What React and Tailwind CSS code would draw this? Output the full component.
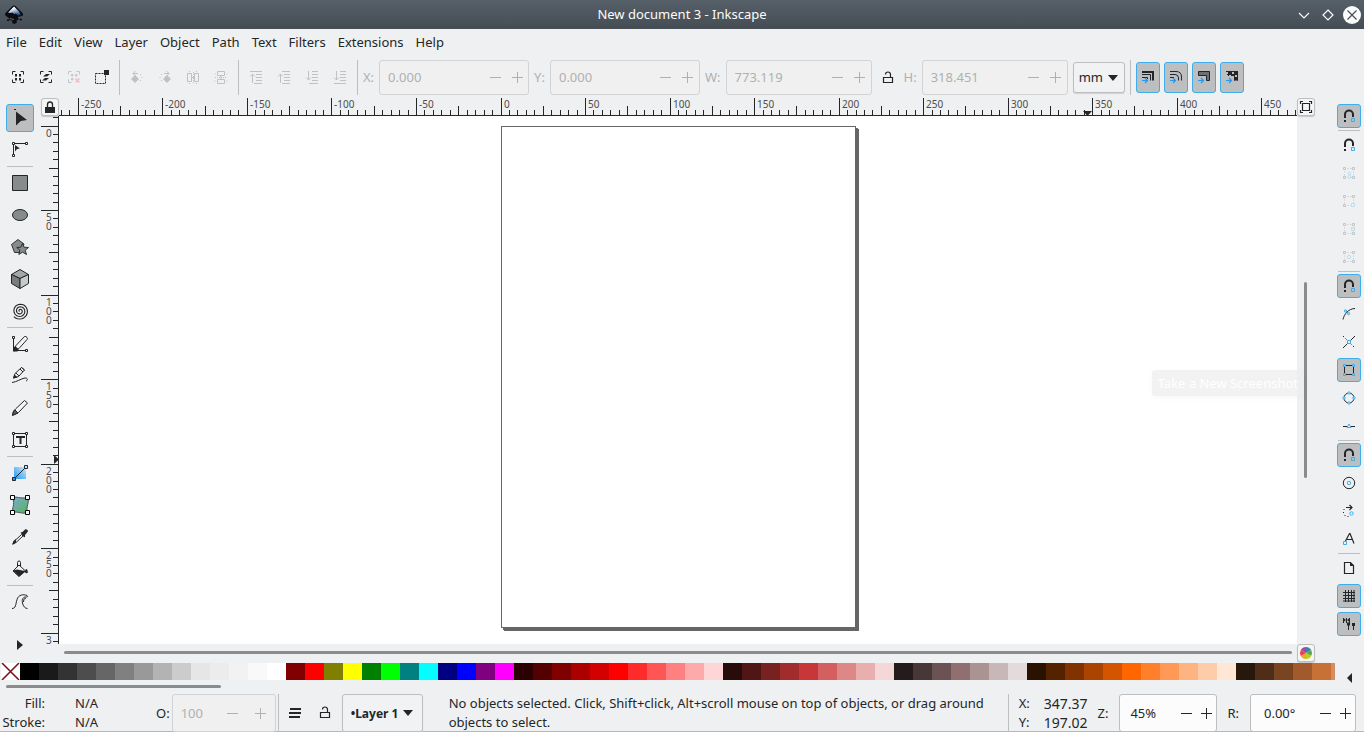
// App.jsx — vector editor window: menus, tool controls, rulers, canvas, palette, status bar
import { useLayoutEffect, useRef, useState } from "react";

const INK = "#232629";
const BLUE = "#3daee9";
const PX_PER_MM = 1.6905;

const MENUS = ["File", "Edit", "View", "Layer", "Object", "Path", "Text", "Filters", "Extensions", "Help"];

const PALETTE = [
  "#000000", "#1a1a1a", "#333333", "#4d4d4d", "#666666", "#808080", "#999999", "#b3b3b3", "#cccccc",
  "#e6e6e6", "#ececec", "#f2f2f2", "#f9f9f9", "#ffffff",
  "#800000", "#ff0000", "#808000", "#ffff00", "#008000", "#00ff00", "#008080", "#00ffff", "#000080",
  "#0000ff", "#800080", "#ff00ff",
  "#2b0000", "#550000", "#800000", "#aa0000", "#d40000", "#ff0000", "#ff2a2a", "#ff5555", "#ff8080",
  "#ffaaaa", "#ffd5d5",
  "#280b0b", "#501616", "#782121", "#a02c2c", "#c83737", "#d35f5f", "#de8787", "#e9afaf", "#f4d7d7",
  "#241c1c", "#483737", "#6c5353", "#916f6f", "#ac9393", "#c8b7b7", "#e3dbdb",
  "#2b1100", "#552200", "#803300", "#aa4400", "#d45500", "#ff6600", "#ff7f2a", "#ff9955", "#ffb380",
  "#ffccaa", "#ffe6d5",
  "#28170b", "#502d16", "#784421", "#a05a2c", "#c87137", "#d38d5f",
];

function Icon({ size = 16, children, ...rest }) {
  return (
    <svg width={size} height={size} viewBox={`0 0 ${size} ${size}`} fill="none" stroke={INK} strokeWidth="1"
      className="shrink-0" aria-hidden="true" {...rest}>
      {children}
    </svg>
  );
}

/* ── Icons: command bar ── */
const CORNERS = "M2.5 4.5v-3h3M10.5 1.5h3v3M13.5 9.5v3h-3M5.5 12.5h-3v-3";

const SelectAll = () => (
  <Icon>
    <path d={CORNERS} />
    <path d="M5 4h2v2.500H5zM9 4h2v2.500H9zM5 8h2v2.500H5zM9 8h2v2.500H9z" fill={INK} stroke="none" />
  </Icon>
);
const SelectAllLayers = () => (
  <Icon>
    <path d={CORNERS} />
    <path d="M5 6.500L8 4h4l-3 2.500zM4 10.500L7 8h4l-3 2.500z" fill={INK} stroke="none" />
  </Icon>
);
const Deselect = () => (
  <Icon stroke="#c3c5c7">
    <path d="M2.5 4.5v-3h3M10.5 1.5h3v3M5.5 12.5h-3v-3M5.5 4.5h1.500v1.500h-1.500zM9.5 4.5h1.500v1.500h-1.500zM5.5 8.5h1.500v1.500h-1.500z" />
    <path d="M9.500 8.500l4 4M13.500 8.500l-4 4" stroke="#f2bcc0" strokeWidth="1.5" />
  </Icon>
);
const TouchSelect = () => (
  <Icon>
    <path d="M1.500 3.500h10v10h-10z" strokeDasharray="2 1" />
    <path d="M10 0h5v5h-5z" fill={INK} stroke="none" />
  </Icon>
);
const RotateLeft = () => (
  <Icon stroke="#bfc1c3">
    <path d="M6 5l4 4-4 4-4-4z" fill="#bfc1c3" stroke="none" />
    <path d="M4 3.500h5M6.500 1L4 3.500L6.500 6" />
    <path d="M11 4.500h1M12.500 7.500h1M11 10.500h1" />
  </Icon>
);
const RotateRight = () => (
  <Icon stroke="#bfc1c3">
    <path d="M10 5l4 4-4 4-4-4z" fill="#bfc1c3" stroke="none" />
    <path d="M12 3.500H7M9.500 1L12 3.500L9.500 6M4 4.500h1M2.500 7.500h1M4 10.500h1" />
  </Icon>
);
const FlipH = () => (
  <Icon stroke="#bfc1c3">
    <path d="M2.500 3.500h4v8h-4zM9.500 3.500h4v8h-4zM6.500 7.500h3" />
    <path d="M4 1.500h1M11 1.500h1M4 13.500h1M11 13.500h1M8.500 2v11" strokeDasharray="1 1" />
  </Icon>
);
const FlipV = () => (
  <Icon stroke="#bfc1c3">
    <path d="M4.500 1.500h7v4h-7zM4.500 9.500h7v4h-7zM8 5.500v4" />
    <path d="M2 3.500v1M2 10.500v1M14 3.500v1M14 10.500v1M2 7.500h12" strokeDasharray="1 1" />
  </Icon>
);
const ToTop = () => (
  <Icon stroke="#bfc1c3"><path d="M2 1.500h12M8 4.500h6M8 7.500h6M8 10.500h6M6 13.500h8M4.500 13V4M2 6.500L4.500 4L7 6.500" /></Icon>
);
const RaiseUp = () => (
  <Icon stroke="#bfc1c3"><path d="M6 1.500h8M8 4.500h6M8 7.500h6M8 10.500h6M6 13.500h8M4.500 13V4M2 6.500L4.500 4L7 6.500" /></Icon>
);
const LowerDown = () => (
  <Icon stroke="#bfc1c3"><path d="M8 1.500h6M8 4.500h6M8 7.500h6M8 10.500h6M5 13.500h9M4.500 1v9M2 7.500L4.500 10L7 7.500" /></Icon>
);
const ToBottom = () => (
  <Icon stroke="#bfc1c3"><path d="M8 1.500h6M8 4.500h6M8 7.500h6M8 10.500h6M2 13.500h12M4.500 1v9M2 7.500L4.500 10L7 7.500" /></Icon>
);
const OpenLock = () => (
  <Icon>
    <path d="M3.500 7.500h9v5h-9z" strokeWidth="1.200" />
    <path d="M10.500 7.500V4.500a2.500 2.500 0 0 0-5 0" strokeWidth="1.200" />
  </Icon>
);

const ARROW = <path d="M2 10.500h5.500M5 8l2.500 2.500L5 13" stroke="#1d99f3" strokeWidth="1.200" />;
const ScaleStroke = () => (
  <Icon><path d="M2 2h11v8.500" strokeWidth="2" /><path d="M2 4.500h8.500v6M2 7.500h5.500V9" />{ARROW}</Icon>
);
const ScaleCorners = () => (
  <Icon><path d="M2 1.500h6q5.500 0 5.500 5.500v3.500M2 4.500h5q3.500 0 3.500 3.500v2.500M2 7.500h4" />{ARROW}</Icon>
);
const MoveGradients = () => (
  <Icon><path d="M2.500 1.500h11v9h-3v-5h-8z" fill="#6d7072" />{ARROW}</Icon>
);
const MovePatterns = () => (
  <Icon>
    <path d="M2 1.500h12M3 4.500h11M4.500 1v5M7.500 1v5M10.500 1v9.500M13.500 1v9.500M10 7.500h4M10 10h4" />
    <path d="M5 2h2v2H5zM11 2h2v2h-2zM8 5h2v1H8zM11 8h2v2h-2z" fill={INK} stroke="none" />
    {ARROW}
  </Icon>
);

/* ── Icons: toolbox ── */
const Selector = () => (
  <Icon size={24}>
    <path d="M8 5.500l11 8.500-6.200 1L8 19.500z" fill={INK} stroke="none" />
    <path d="M6 3.500h2" />
  </Icon>
);
const NodeTool = () => (
  <Icon size={24}>
    <path d="M5.500 16V5.500H17" />
    <path d="M4.500 4.500h2v2h-2zM17.500 4.500h2v2h-2zM4.500 16.500h2v2h-2z" fill="#fff" />
    <path d="M7 7l5 3.500-3 .5-2 2.500z" fill={INK} stroke="none" />
  </Icon>
);
const RectTool = () => <Icon size={24}><path d="M4.500 4.500h15v15h-15z" fill="#888b8c" /></Icon>;
const EllipseTool = () => <Icon size={24}><ellipse cx="12" cy="12" rx="7.500" ry="5.500" fill="#888b8c" /></Icon>;
const StarTool = () => (
  <Icon size={24} strokeWidth="0.900">
    <path d="M10 4.500l6 4.500-2.500 8.500H6.500L3.500 9.500z" fill="#888b8c" />
    <path d="M14.500 8.500l1.600 3.700 4.400.3-3.300 2.800 1.300 4.200-4-2.300-3.700 2.300 1-4.300-3-2.700 4-.3z" fill="#888b8c" />
  </Icon>
);
const BoxTool = () => (
  <Icon size={24}>
    <path d="M12 2.500l8.500 5L12 11.500l-8.500-4z" fill="#a4a6a7" />
    <path d="M3.500 7.500l8.500 4v10l-8.500-5z" fill="#7a7d7e" />
    <path d="M20.500 7.500l-8.500 4v10l8.500-5z" fill="#c8caca" />
  </Icon>
);

/* Three turns outward from the centre, ending at the lower left */
const SPIRAL = Array.from({ length: 73 }, (_, i) => {
  const turn = i / 24;
  const angle = turn * 2 * Math.PI + 2.4;
  const r = 0.6 + turn * 2.6;
  return `${i ? "L" : "M"}${(12 + r * Math.cos(angle)).toFixed(2)} ${(12 + r * Math.sin(angle)).toFixed(2)}`;
}).join("");
const SpiralTool = () => <Icon size={24}><path d={SPIRAL} strokeWidth="1.100" /></Icon>;

const PenTool = () => (
  <Icon size={24}>
    <path d="M5.500 6v12.500H18" />
    <path d="M4.500 4.500h2v2h-2zM17.500 17.500h2v2h-2z" fill="#fff" />
    <path d="M8 13.500l8.500-9q1.500-.5 2.500 1t0 2L11 16.500l-5 2.500z" fill="#f4f5f6" />
    <path d="M5 19.500V15l2.500-.5 3 2.500-1 2.500z" fill={INK} stroke="none" />
  </Icon>
);
const PencilTool = () => (
  <Icon size={24}>
    <path d="M7 9.500l6.500-6 3 2.500L10.500 12.500 5.500 14zM12 5l3 3M8 9l3 3" />
    <path d="M5 14.500l1.500-4 3 3z" fill={INK} stroke="none" />
    <path d="M4 18.500c5-.5 9-4 13-4.500 3-.2 3 2.500 1 3M13.500 3.500l3 2.500" />
  </Icon>
);
const BrushTool = () => (
  <Icon size={24}>
    <path d="M7.500 13L16.500 4.500l3 2.500-9 9.500-3 1.500-3 1 1-3.500z" fill="#f4f5f6" />
    <path d="M4.500 19.500l1-4.500 1.500-1 3 3z" fill="#5b5e60" />
  </Icon>
);
const TextTool = () => (
  <Icon size={24}>
    <path d="M5.500 5.500h13v13h-13z" />
    <path d="M4.500 4.500h2v2h-2zM17.500 4.500h2v2h-2zM4.500 17.500h2v2h-2zM17.500 17.500h2v2h-2z" fill="#fff" />
    <path d="M8 9h9M12.500 8.500V16" strokeWidth="2" />
  </Icon>
);
const GradientTool = () => (
  <Icon size={24}>
    <defs>
      <linearGradient id="grad-tool" x1="0" y1="1" x2="1" y2="0">
        <stop offset="0" stopColor="#1d99f3" /><stop offset="1" stopColor="#cbe7fb" />
      </linearGradient>
    </defs>
    <path d="M6 6h12v12H6z" fill="url(#grad-tool)" stroke="none" />
    <path d="M6 18L18 6" />
    <path d="M4.500 16.500h3v3h-3z" fill="#1d99f3" /><path d="M16.500 4.500h3v3h-3z" fill="#cbe7fb" />
  </Icon>
);
const MeshTool = () => (
  <Icon size={24}>
    <defs>
      <linearGradient id="mesh-tool" x1="0" y1="0" x2="1" y2="1">
        <stop offset="0" stopColor="#7aa9d6" /><stop offset="1" stopColor="#57b558" />
      </linearGradient>
    </defs>
    <path d="M4.500 4.500c4-1.500 7 1.500 15 0 2.500 5-2 9 0 15-6 2-9-1.500-15 0-1-4 3-8 0-15z" fill="url(#mesh-tool)" stroke="#4d5052" />
    <path d="M2.500 2.500h4v4h-4zM17.500 2.500h4v4h-4zM2.500 17.500h4v4h-4zM17.500 17.500h4v4h-4z" fill="#fff" stroke="#000" />
  </Icon>
);
const DropperTool = () => (
  <Icon size={24}>
    <path d="M13.500 9.500L6.500 16l-1.500 3L8 17.500l7-6.500z" fill="#f4f5f6" />
    <path d="M12.500 7.500l2-.5 2.500-2.500q1.500-.5 2.500.5t0 2L17 10v2l-1 .3zM4 20l1.500-4 2.500-2v3.500z" fill={INK} stroke="none" />
  </Icon>
);
const BucketTool = () => (
  <Icon size={24}>
    <path d="M9.500 10V5.500q0-1.500 1.500-1.500t1.500 1.500V9M11 8l6.500 6L11 19.500 5 14z" />
    <path d="M5 13.500l4-1 4 .8 4.500.7-6.500 5.500z" fill={INK} stroke="none" />
    <path d="M18.500 12q1.500 2.500 1 3.500t-2 0 1-3.500z" fill={INK} strokeWidth=".5" />
  </Icon>
);
const TweakTool = () => (
  <Icon size={24}>
    <path d="M4 18.500c4 0 3.500-4 5-9S15.500 4 19 5.500c1 1 .5 1.500-.5 1.500-3-.5-5 2-4 6 .5 3 2.500 5.500 5 5.500M18 8q-3 .5-2.500 4" />
  </Icon>
);

/* ── Icons: snap bar ── */
const Magnet = () => (
  <Icon>
    <path d="M4 10V6.500a4 4 0 0 1 8 0V9" strokeWidth="2" />
    <path d="M3 12h2v2H3z" fill={INK} stroke="none" />
    <path d="M10.500 10.500h3v3h-3z" stroke={BLUE} />
  </Icon>
);
const BOX_FAINT = "M2.500 2.500h2v2h-2zM11.500 2.500h2v2h-2zM2.500 11.500h2v2h-2z";
function FaintBox({ children, corner = true }) {
  return (
    <Icon stroke="#c3c5c7">
      <path d={BOX_FAINT} />
      {corner && <path d="M11.500 11.500h2v2h-2z" />}
      <path d="M6.500 3.500h4M3.500 6.500v4M12.500 6.500v4M6.500 12.500h4" strokeDasharray="1 2" />
      <g stroke="#b9dff3">{children}</g>
    </Icon>
  );
}
const SnapBBox = () => <FaintBox><circle cx="8.500" cy="8.500" r="1.500" /><circle cx="8.500" cy="12" r="1.500" /></FaintBox>;
const SnapBCorner = () => <FaintBox corner={false}><path d="M10.500 10.500h3v3h-3z" /></FaintBox>;
const SnapBEdge = () => <FaintBox><path d="M10.500 6.500h3v3h-3z" /></FaintBox>;
const SnapBCenter = () => <FaintBox><circle cx="8" cy="8" r="1.700" /></FaintBox>;
const SnapPath = () => (
  <Icon>
    <path d="M2 13.500C3 8 8 2.500 14 2.500" />
    <circle cx="4.500" cy="5" r="1.200" stroke={BLUE} /><circle cx="7.500" cy="7.500" r="1.200" stroke={BLUE} />
    <path d="M4.500 5l3 2.500" stroke={BLUE} />
  </Icon>
);
const SnapCross = () => (
  <Icon>
    <path d="M2 14L14 2" /><path d="M2 2l12 12" strokeDasharray="1.500 2" />
    <path d="M6.500 6.500h3v3h-3z" fill="#eff0f1" stroke={BLUE} />
  </Icon>
);
const SnapCusp = () => (
  <Icon>
    <path d="M3.500 3.500h9v9h-9z" />
    <path d="M2.500 2.500h2v2h-2zM11.500 2.500h2v2h-2zM2.500 11.500h2v2h-2zM11.500 11.500h2v2h-2z" fill="#bdbebf" stroke={BLUE} />
  </Icon>
);
const SnapSmooth = () => (
  <Icon>
    <circle cx="8" cy="8" r="5" />
    <g fill="#eff0f1" stroke={BLUE}>
      <circle cx="8" cy="3" r="1.200" /><circle cx="13" cy="8" r="1.200" />
      <circle cx="8" cy="13" r="1.200" /><circle cx="3" cy="8" r="1.200" />
    </g>
  </Icon>
);
const SnapMid = () => (
  <Icon><path d="M2 8.500h12" /><path d="M8 6l2 3.500H6z" fill="#eff0f1" stroke={BLUE} /></Icon>
);
const SnapCenter = () => <Icon><circle cx="8" cy="8" r="5.700" /><circle cx="8" cy="8" r="1.700" stroke={BLUE} /></Icon>;
const SnapRotation = () => (
  <Icon>
    <path d="M5 4.500h6M8.500 2L11 4.500L8.500 7" strokeWidth="1.200" />
    <path d="M3 6v1M2.500 9v1M4 12v1M7 13v1" />
    <circle cx="10.500" cy="10.500" r="1.700" stroke={BLUE} />
  </Icon>
);
const SnapText = () => (
  <Icon>
    <path d="M4.500 10L8.500 2.500h.5L13 12.500M6 8.500h5.500" strokeWidth="1.200" />
    <path d="M2.500 10.500h3v3h-3z" stroke={BLUE} />
  </Icon>
);
const SnapPage = () => (
  <Icon><path d="M3.500 2.500h6l3 3v8h-9z" strokeWidth="1.200" /><path d="M9 2v4h4z" fill={INK} stroke="none" /></Icon>
);
const SnapGrid = () => (
  <Icon><path d="M4.500 2v12M7.500 2v12M10.500 2v12M13 2v12M2 4.500h12M2 7.500h12M2 10.500h12M2 13h12" /></Icon>
);
const SnapGuides = () => (
  <Icon>
    <path d="M2.500 2v5M5.500 2v5M8.500 2v5M7.500 8v6M12.500 9v5" />
    <path d="M6 6.500h3v3H6zM11 7h3v3h-3zM3 2.500l2 1.500-2 1.500zM8 2.500L6 4l2 1.500z" fill={INK} stroke="none" />
  </Icon>
);

const COMMANDS = [
  [
    { label: "Select all", icon: SelectAll },
    { label: "Select all in all layers", icon: SelectAllLayers },
    { label: "Deselect", icon: Deselect, disabled: true },
    { label: "Toggle touch selection", icon: TouchSelect },
  ],
  [
    { label: "Rotate left", icon: RotateLeft, disabled: true },
    { label: "Rotate right", icon: RotateRight, disabled: true },
    { label: "Flip horizontally", icon: FlipH, disabled: true },
    { label: "Flip vertically", icon: FlipV, disabled: true },
  ],
  [
    { label: "Raise to top", icon: ToTop, disabled: true },
    { label: "Raise", icon: RaiseUp, disabled: true },
    { label: "Lower", icon: LowerDown, disabled: true },
    { label: "Lower to bottom", icon: ToBottom, disabled: true },
  ],
];

const TRANSFORMS = [
  { label: "Scale stroke width", icon: ScaleStroke },
  { label: "Scale rounded corners", icon: ScaleCorners },
  { label: "Move gradients", icon: MoveGradients },
  { label: "Move patterns", icon: MovePatterns },
];

const TOOLS = [
  [{ label: "Selector", icon: Selector }, { label: "Node", icon: NodeTool }],
  [
    { label: "Rectangle", icon: RectTool }, { label: "Ellipse", icon: EllipseTool }, { label: "Star", icon: StarTool },
    { label: "3D box", icon: BoxTool }, { label: "Spiral", icon: SpiralTool },
  ],
  [
    { label: "Pen", icon: PenTool }, { label: "Pencil", icon: PencilTool },
    { label: "Calligraphy", icon: BrushTool }, { label: "Text", icon: TextTool },
  ],
  [
    { label: "Gradient", icon: GradientTool }, { label: "Mesh", icon: MeshTool },
    { label: "Dropper", icon: DropperTool }, { label: "Paint bucket", icon: BucketTool },
  ],
  [{ label: "Tweak", icon: TweakTool }],
];

const SNAPS = [
  [{ label: "Enable snapping", icon: Magnet, on: true }],
  [
    { label: "Snap bounding boxes", icon: Magnet }, { label: "Bounding box edges", icon: SnapBBox, disabled: true },
    { label: "Bounding box corners", icon: SnapBCorner, disabled: true },
    { label: "Edge midpoints", icon: SnapBEdge, disabled: true },
    { label: "Bounding box centers", icon: SnapBCenter, disabled: true },
  ],
  [
    { label: "Snap nodes", icon: Magnet, on: true }, { label: "Snap to paths", icon: SnapPath },
    { label: "Path intersections", icon: SnapCross }, { label: "Cusp nodes", icon: SnapCusp, on: true },
    { label: "Smooth nodes", icon: SnapSmooth }, { label: "Line midpoints", icon: SnapMid },
  ],
  [
    { label: "Snap others", icon: Magnet, on: true }, { label: "Object centers", icon: SnapCenter },
    { label: "Rotation centers", icon: SnapRotation }, { label: "Text baselines", icon: SnapText },
  ],
  [
    { label: "Page border", icon: SnapPage }, { label: "Grids", icon: SnapGrid, on: true },
    { label: "Guides", icon: SnapGuides, on: true },
  ],
];

function ToggleButton({ label, icon: Glyph, initial, disabled, size = "size-6" }) {
  const [on, setOn] = useState(initial);
  return (
    <button aria-label={label} aria-pressed={on} disabled={disabled} onClick={() => setOn(v => !v)}
      className={`${size} shrink-0 flex items-center justify-center rounded-[3px] border ${
        on ? "bg-[#bdbebf] border-[#3daee9]" : "border-transparent"
      }`}>
      <Glyph />
    </button>
  );
}

function SpinBox({ label, name, value, disabled, width, gap = "gap-[5px]", step = "w-[22px]", pad = "pl-2", labelColor = "" }) {
  const [val, setVal] = useState(value);
  const bump = d => setVal(v => String(parseFloat(v) + d));
  return (
    <div className={`flex items-center shrink-0 ${gap} ${disabled ? "text-[#aeb0b1]" : "text-[#232629]"}`}>
      <label htmlFor={name} className={labelColor}>{label}</label>
      <div className={`flex items-center h-full border rounded-[3px] overflow-hidden ${width} ${
        disabled ? "border-[#d2d3d4] bg-[#f0f0f0]" : "border-[#bcbebf] bg-[#fcfcfc]"
      }`}>
        <input id={name} type="text" value={val} disabled={disabled} onChange={e => setVal(e.target.value)}
          className={`flex-1 min-w-0 bg-transparent outline-none ${pad}`} />
        <button aria-label={`Decrease ${label}`} disabled={disabled} onClick={() => bump(-1)}
          className={`h-full shrink-0 flex items-center justify-center ${step}`}>
          <Icon size={11} stroke="currentColor"><path d="M0 5.500h11" /></Icon>
        </button>
        <button aria-label={`Increase ${label}`} disabled={disabled} onClick={() => bump(1)}
          className={`h-full shrink-0 flex items-center justify-center ${step}`}>
          <Icon size={11} stroke="currentColor"><path d="M0 5.500h11M5.500 0v11" /></Icon>
        </button>
      </div>
    </div>
  );
}

function Divider() {
  return <div className="w-px self-stretch bg-[#bcbebf] shrink-0" />;
}

/* Current size of an element, kept up to date */
function useSize() {
  const ref = useRef(null);
  const [size, setSize] = useState({ width: 0, height: 0 });
  useLayoutEffect(() => {
    const read = () => {
      const box = ref.current.getBoundingClientRect();
      setSize({ width: box.width, height: box.height });
    };
    read();
    const observer = new ResizeObserver(read);
    observer.observe(ref.current);
    return () => observer.disconnect();
  }, []);
  return [ref, size];
}

/* Ticks every 5 mm, longer at 25, longest and labelled at 50 */
function ticksWithin(length, origin) {
  const out = [];
  const first = Math.ceil(-origin / PX_PER_MM / 5) * 5;
  for (let mm = first; origin + mm * PX_PER_MM < length; mm += 5) {
    out.push({ mm, pos: Math.floor(origin + mm * PX_PER_MM) + 0.5 });
  }
  return out;
}

function HorizontalRuler() {
  const [ref, { width }] = useSize();
  return (
    <svg ref={ref} className="flex-1 min-w-0 h-[18px]" fill="#4d4d4d" fontSize="10" aria-label="Horizontal ruler">
      {ticksWithin(width, 442).map(({ mm, pos }) => (
        <g key={mm}>
          <path d={`M${pos} ${mm % 50 === 0 ? 0 : mm % 25 === 0 ? 8 : 12}V17`} stroke={INK} />
          {mm % 50 === 0 && <text x={pos + 2.5} y="10">{mm}</text>}
        </g>
      ))}
      <rect x="0" y="17" width="100%" height="1" fill={INK} />
      <path d="M1024 13h9l-4.500 5z" fill={INK} />
    </svg>
  );
}

function VerticalRuler() {
  const [ref, { height }] = useSize();
  return (
    <svg ref={ref} className="w-[18px] shrink-0 h-full" fill="#4d4d4d" fontSize="10" aria-label="Vertical ruler">
      {ticksWithin(height, 10).map(({ mm, pos }) => (
        <g key={mm}>
          <path d={`M${mm % 50 === 0 ? 0 : mm % 25 === 0 ? 8 : 12} ${pos}H17`} stroke={INK} />
          {mm % 50 === 0 && String(mm).split("").map((digit, i) => (
            pos + 10 + i * 9 <= height && <text key={i} x="5" y={pos + 10 + i * 9}>{digit}</text>
          ))}
        </g>
      ))}
      <rect x="17" y="0" width="1" height="100%" fill={INK} />
      <path d="M13 339v9l5-4.500z" fill={INK} />
    </svg>
  );
}

function CornerButton({ label, children }) {
  return (
    <button aria-label={label}
      className="size-[18px] shrink-0 flex items-center justify-center rounded-[3px] border border-[#bcbebf] bg-[#f4f5f5] shadow-[0_1px_1px_#c4c6c7]">
      {children}
    </button>
  );
}

function TitleBar() {
  return (
    <header className="h-[29px] shrink-0 flex items-center bg-linear-to-b from-[#566069] to-[#454c54] text-[#fcfcfc] text-[13px]">
      <div className="w-20 pl-1">
        <svg width="20" height="20" viewBox="0 0 20 20" aria-hidden="true">
          <defs>
            <linearGradient id="logo-snow" x1="0.300" y1="0" x2="0.800" y2="1">
              <stop offset="0.200" stopColor="#ffffff" /><stop offset="0.550" stopColor="#8aa6cc" />
              <stop offset="1" stopColor="#173667" />
            </linearGradient>
          </defs>
          <path d="M10 0.500q1 0 2 1l6.500 6.500q1.500 2-.5 3l-4 1q-1 1 1 1.500l-1 1.500-1.500.5.500 2-2.500 1.500-2.500-1 .5-2-4-1.500 1-1L2 11q-2-1.500-.5-3L8 1.500q1-1 2-1z" fill="#0b0d10" />
          <path d="M10 1.500l5 5 2 3.500-3 .5-2-2-2 .5-1.500-1.500-2 .5-2.500-.5z" fill="url(#logo-snow)" />
          <path d="M15.500 14.500h2.500M3 15l2 .5" stroke="#0b0d10" strokeWidth="1.500" />
          <path d="M6 13.500l4 1" stroke="#6a7079" />
        </svg>
      </div>
      <h1 className="flex-1 text-center">New document 3 - Inkscape</h1>
      <div className="w-20 pr-[3px] flex items-center justify-end gap-[6px]">
        <button aria-label="Minimize">
          <Icon size={18} stroke="#fcfcfc"><path d="M4 7l5 5 5-5" strokeWidth="1.200" /></Icon>
        </button>
        <button aria-label="Maximize">
          <Icon size={18} stroke="#fcfcfc"><path d="M9 4l5 5-5 5-5-5z" strokeWidth="1.200" /></Icon>
        </button>
        <button aria-label="Close" className="rounded-full bg-[#fcfcfc]">
          <Icon size={18} stroke="#4a525a"><path d="M4.500 4.500l9 9M13.500 4.500l-9 9" strokeWidth="1.300" /></Icon>
        </button>
      </div>
    </header>
  );
}

function CommandBar() {
  return (
    <div className="h-[41px] shrink-0 flex items-center py-[3px] pl-1.5">
      {COMMANDS.map((group, i) => (
        <div key={i} className="flex self-stretch items-center gap-1 mr-[5px]">
          {group.map(({ label, icon: Glyph, disabled }) => (
            <button key={label} aria-label={label} disabled={disabled} className="w-6 h-8 flex items-center justify-center">
              <Glyph />
            </button>
          ))}
          <div className="self-stretch flex pl-px"><Divider /></div>
        </div>
      ))}
      <div className="flex self-stretch items-stretch gap-[5px]">
        <SpinBox label="X:" name="pos-x" value="0.000" width="w-[150px]" disabled />
        <SpinBox label="Y:" name="pos-y" value="0.000" width="w-[150px]" disabled />
        <SpinBox label="W:" name="size-w" value="773.119" width="w-[146px]" disabled />
        <button aria-label="Lock width and height" className="w-[22px] flex items-center justify-center"><OpenLock /></button>
        <SpinBox label="H:" name="size-h" value="318.451" width="w-[146px]" disabled />
      </div>
      <div className="relative mx-[5px] shrink-0">
        <select aria-label="Units" defaultValue="mm"
          className="appearance-none w-[52px] h-[31px] pl-[5px] rounded-[3px] border border-[#bcbebf] bg-[#f1f2f3] shadow-[0_1px_1px_#d0d2d3]">
          {["mm", "px", "cm", "in", "pt"].map(u => <option key={u}>{u}</option>)}
        </select>
        <svg width="10" height="6" className="absolute right-[7px] top-[13px] pointer-events-none"><path d="M0 0h10L5 6z" fill={INK} /></svg>
      </div>
      <Divider />
      <div className="flex gap-1 ml-[5px]">
        {TRANSFORMS.map(t => <ToggleButton key={t.label} {...t} initial size="w-6 h-[31px]" />)}
      </div>
    </div>
  );
}

function Toolbox() {
  const [active, setActive] = useState("Selector");
  return (
    <nav className="w-[41px] shrink-0 flex flex-col items-center pt-1 pr-px">
      {TOOLS.map((group, i) => (
        <div key={i} className="flex flex-col items-center">
          {i > 0 && <div className="w-[26px] h-px bg-[#bcbebf]" />}
          {group.map(({ label, icon: Glyph }) => (
            <div key={label} className="h-8 flex items-center">
              <button aria-label={label} aria-pressed={active === label} onClick={() => setActive(label)}
                className={`size-7 flex items-center justify-center rounded-[3px] border ${
                  active === label ? "bg-[#bdbebf] border-[#3daee9]" : "border-transparent"
                }`}>
                <Glyph />
              </button>
            </div>
          ))}
        </div>
      ))}
      <button aria-label="More tools" className="mt-auto mb-1.5 p-1">
        <svg width="6" height="10"><path d="M0 0l6 5-6 5z" fill={INK} /></svg>
      </button>
    </nav>
  );
}

function Canvas() {
  return (
    <main className="flex-1 min-w-0 flex flex-col">
      <div className="flex">
        <CornerButton label="Lock guides">
          <Icon size={14}>
            <path d="M2 7h10v6H2z" fill={INK} stroke="none" />
            <path d="M4.500 7V4.500a2.500 2.500 0 0 1 5 0V7" strokeWidth="1.300" />
          </Icon>
        </CornerButton>
        <HorizontalRuler />
        <CornerButton label="Zoom to page">
          <Icon size={14}>
            <path d="M3.500 3.500h7v7h-7zM1.500 4V1.500H4M10 1.500h2.500V4M12.500 10v2.500H10M4 12.500H1.500V10" strokeWidth="1.200" />
          </Icon>
        </CornerButton>
      </div>
      <div className="flex-1 min-h-0 flex">
        <VerticalRuler />
        <div className="relative flex-1 min-w-0 bg-white">
          {/* Page on the free canvas */}
          <div className="absolute left-[442px] top-2.5 w-[355px] h-[502px] border border-[#666] bg-white shadow-[2px_2px_0_#666,3px_3px_0_#666]" />
          {/* Fading tooltip */}
          <div className="absolute -right-[7px] bottom-[248px] px-1.5 h-[26px] leading-[26px] rounded-[3px] bg-[#ececec]/70 text-white text-[13px] whitespace-nowrap shadow-[0_2px_6px_#00000008]">
            Take a New Screenshot
          </div>
        </div>
        <div className="w-[18px] shrink-0 pl-[7px]">
          <div className="mt-[166px] h-[196px] w-[3px] rounded-full bg-[#898b8d]" />
        </div>
      </div>
      <div className="h-4 flex items-start">
        <div className="flex-1 ml-[23px] mr-[5px] mt-[7px] h-[3px] rounded-full bg-[#898b8d]" />
        <CornerButton label="Color managed view">
          <svg width="14" height="14" viewBox="0 0 14 14" aria-hidden="true">
            <path d="M7 7V1A6 6 0 0 1 12.200 4z" fill="#3f7fb5" />
            <path d="M7 7l5.200-3a6 6 0 0 1 0 6z" fill="#5aa845" />
            <path d="M7 7l5.200 3A6 6 0 0 1 7 13z" fill="#b9cf1c" />
            <path d="M7 7v6a6 6 0 0 1-5.200-3z" fill="#f5a623" />
            <path d="M7 7l-5.200 3a6 6 0 0 1 0-6z" fill="#ee3f4d" />
            <path d="M7 7L1.800 4A6 6 0 0 1 7 1z" fill="#a8479c" />
          </svg>
        </CornerButton>
      </div>
    </main>
  );
}

function SnapBar() {
  return (
    <aside className="w-[49px] shrink-0 flex flex-col items-end pt-1 pr-[3px]">
      {SNAPS.map((group, i) => (
        <div key={i} className="flex flex-col items-center">
          {i > 0 && <div className="w-[22px] h-px bg-[#bcbebf]" />}
          {group.map(({ label, icon, on = false, disabled }) => (
            <div key={label} className="h-7 flex items-center">
              <ToggleButton label={label} icon={icon} initial={on} disabled={disabled} />
            </div>
          ))}
        </div>
      ))}
    </aside>
  );
}

function Palette() {
  return (
    <div className="shrink-0 flex pt-[3px] pl-px">
      <div className="flex-1 min-w-0">
        <div className="flex h-[17px] overflow-hidden">
          <button aria-label="No color" className="w-[19px] shrink-0 bg-white">
            <svg width="19" height="17" aria-hidden="true"><path d="M1 0l17 17M18 0L1 17" stroke="#7a0f14" strokeWidth="1.500" /></svg>
          </button>
          {PALETTE.map((color, i) => (
            <button key={i} aria-label={color} className="w-[19px] shrink-0" style={{ backgroundColor: color }} />
          ))}
        </div>
        <div className="mt-[5px] ml-[5px] h-[3px] w-[215px] rounded-full bg-[#898b8d]" />
      </div>
      <button aria-label="Palette menu" className="w-[29px] h-[30px] flex items-center justify-center">
        <svg width="5" height="10"><path d="M5 0v10L0 5z" fill={INK} /></svg>
      </button>
    </div>
  );
}

function StatusBar() {
  return (
    <footer className="shrink-0 h-[39px] flex items-stretch pt-px shadow-[inset_0_-1px_0_#b5b7b8] leading-[19px]">
      <dl className="w-[152px] shrink-0 grid grid-cols-[45px_1fr] gap-x-[30px] content-center">
        <dt className="text-right">Fill:</dt><dd>N/A</dd>
        <dt className="text-right">Stroke:</dt><dd>N/A</dd>
      </dl>
      <div className="flex items-stretch ml-1">
        <SpinBox label="O:" name="opacity" value="100" width="w-[104px]" gap="gap-0.5" step="w-7" labelColor="text-[#232629]" disabled />
      </div>
      <div className="flex ml-0.5 shrink-0">
        <Divider />
        <button aria-label="Layer visibility" className="w-8 flex items-center justify-center">
          <Icon size={14} strokeWidth="2"><path d="M2 3h11M1 7h12M1 11h11" /></Icon>
        </button>
        <button aria-label="Layer lock" className="w-7 flex items-center justify-center"><OpenLock /></button>
      </div>
      <div className="relative ml-[3px] shrink-0">
        <select aria-label="Current layer" defaultValue="layer1"
          className="appearance-none w-[81px] h-full pl-2 text-[12px] font-bold rounded-[3px] border border-[#bcbebf] bg-[#f1f2f3] shadow-[0_1px_1px_#d0d2d3]">
          <option value="layer1">•Layer 1</option>
        </select>
        <svg width="10" height="6" className="absolute right-[10px] top-4 pointer-events-none"><path d="M0 0h10L5 6z" fill={INK} /></svg>
      </div>
      <p className="flex-1 min-w-0 pl-[26px] pr-5 self-center">
        No objects selected. Click, Shift+click, Alt+scroll mouse on top of objects, or drag around objects to select.
      </p>
      <Divider />
      <dl className="shrink-0 grid grid-cols-[25px_auto] px-2.5 content-center">
        <dt>X:</dt><dd className="text-right text-[14px] leading-[19px]">347.37</dd>
        <dt>Y:</dt><dd className="text-right text-[14px] leading-[19px]">197.02</dd>
      </dl>
      <div className="flex items-stretch gap-2.5 pr-2">
        <SpinBox label="Z:" name="zoom" value="45%" width="w-[98px]" gap="gap-[11px]" step="w-5" pad="pl-2.5" />
        <SpinBox label="R:" name="rotation" value="0.00°" width="w-[106px]" gap="gap-[11px]" step="w-5" pad="pl-[13px]" />
      </div>
    </footer>
  );
}

export default function App() {
  return (
    <div className="h-screen flex flex-col overflow-hidden bg-[#eff0f1] text-[#232629] text-[13px]"
      style={{ fontFamily: "'Noto Sans', 'Open Sans', sans-serif" }}>
      <TitleBar />
      <div role="menubar" className="h-7 shrink-0 flex items-center gap-3 px-[6px]">
        {MENUS.map(m => <button key={m} role="menuitem">{m}</button>)}
      </div>
      <CommandBar />
      <div className="flex-1 min-h-0 flex">
        <Toolbox />
        <Canvas />
        <SnapBar />
      </div>
      <Palette />
      <StatusBar />
    </div>
  );
}
